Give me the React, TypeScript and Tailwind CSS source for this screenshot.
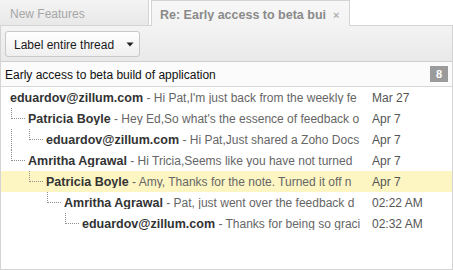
import React from "react";

type Row = {
  level: number;
  name: string;
  snippet: string;
  date: string;
  cont?: number[];
  hl?: boolean;
};

const rows: Row[] = [
  { level: 0, name: "eduardov@zillum.com", snippet: "Hi Pat,I'm just back from the weekly fe", date: "Mar 27" },
  { level: 1, name: "Patricia Boyle", snippet: "Hey Ed,So what's the essence of feedback o", date: "Apr 7" },
  { level: 2, name: "eduardov@zillum.com", snippet: "Hi Pat,Just shared a Zoho Docs", date: "Apr 7", cont: [1] },
  { level: 1, name: "Amritha Agrawal", snippet: "Hi Tricia,Seems like you have not turned", date: "Apr 7" },
  { level: 2, name: "Patricia Boyle", snippet: "Amy, Thanks for the note. Turned it off n", date: "Apr 7", hl: true },
  { level: 3, name: "Amritha Agrawal", snippet: "Pat, just went over the feedback d", date: "02:22 AM" },
  { level: 4, name: "eduardov@zillum.com", snippet: "Thanks for being so graci", date: "02:32 AM" },
];

function lineX(level: number) {
  return 18 * level - 8;
}

export default function App() {
  return (
    <div className="w-[453px] h-[270px] bg-white overflow-hidden font-['Liberation_Sans',Arial,sans-serif] text-[12px] leading-none">
      {/* Tabs */}
      <div className="flex h-[26px]">
        <div className="w-[149px] h-full bg-gradient-to-b from-[#f4f4f4] to-[#e8e8e8] border-r border-b border-[#d4d4d4] flex items-center pl-[10px] pt-[3px] text-[#a6a6a6] box-border">
          New Features
        </div>
        <div className="w-[2px] h-full border-b border-[#d4d4d4] box-border" />
        <div className="w-[199px] h-full border-l border-r border-t border-[#d4d4d4] bg-gradient-to-b from-[#f7f7f7] to-[#f3f3f3] flex items-center pl-[8px] pt-[3px] box-border">
          <span className="w-[166px] overflow-hidden whitespace-nowrap font-bold text-[12.5px] text-[#8a8a8a]">
            Re: Early access to beta bui
          </span>
          <span className="ml-[7px] text-[11px] text-[#b0b0b0] font-bold">×</span>
        </div>
        <div className="flex-1 h-full border-b border-[#d4d4d4] box-border" />
      </div>

      {/* Panel */}
      <div className="h-[244px] border-l border-r border-b border-[#d4d4d4] box-border flex flex-col">
        {/* Toolbar */}
        <div className="h-[36px] bg-gradient-to-b from-[#f3f3f3] to-[#e9e9e9] border-b border-[#cfcfcf] box-border flex items-center pl-[4px]">
          <button className="h-[26px] w-[135px] mt-[1px] rounded-[3px] border border-[#c8c8c8] bg-gradient-to-b from-[#ffffff] to-[#efefef] flex items-center pl-[8px] pt-[1px] text-[#1a1a1a] text-[12px] box-border">
            <span>Label entire thread</span>
            <svg className="ml-[12px]" width="8" height="5" viewBox="0 0 8 5">
              <path d="M0.5 0.5 L7.5 0.5 L4 4.5 Z" fill="#222" />
            </svg>
          </button>
        </div>

        {/* Subject */}
        <div className="h-[25px] border-b border-[#d8d8d8] box-border bg-[#fbfbfb] flex items-center justify-between pl-[4px] pr-[4px]">
          <span className="text-[#111] pt-[1px]">Early access to beta build of application</span>
          <span className="w-[18px] h-[16px] bg-[#9b9b9b] text-white font-bold text-[11px] flex items-center justify-center">
            8
          </span>
        </div>

        {/* Thread rows */}
        <div className="flex flex-col">
          {rows.map((r, i) => (
            <div
              key={i}
              className={`relative h-[21px] flex items-center ${r.hl ? "bg-[#fdf6c3]" : ""}`}
            >
              {r.cont?.map((c) => (
                <div
                  key={c}
                  className="absolute top-0 h-[21px] border-l border-dotted border-[#8f8f8f]"
                  style={{ left: lineX(c) }}
                />
              ))}
              {r.level > 0 && (
                <>
                  <div
                    className="absolute top-0 h-[11px] border-l border-dotted border-[#8f8f8f]"
                    style={{ left: lineX(r.level) }}
                  />
                  <div
                    className="absolute top-[10px] w-[14px] border-t border-dotted border-[#8f8f8f]"
                    style={{ left: lineX(r.level) }}
                  />
                </>
              )}
              <div
                className="flex-1 min-w-0 overflow-hidden whitespace-nowrap pt-[1px]"
                style={{ paddingLeft: 9 + 18 * r.level }}
              >
                <span className="font-bold text-[12.5px] text-[#333]">{r.name}</span>
                <span className="text-[#666]"> - {r.snippet}</span>
              </div>
              <div className="w-[88px] pl-[8px] pt-[1px] text-[#555] whitespace-nowrap">{r.date}</div>
            </div>
          ))}
        </div>
      </div>
    </div>
  );
}
